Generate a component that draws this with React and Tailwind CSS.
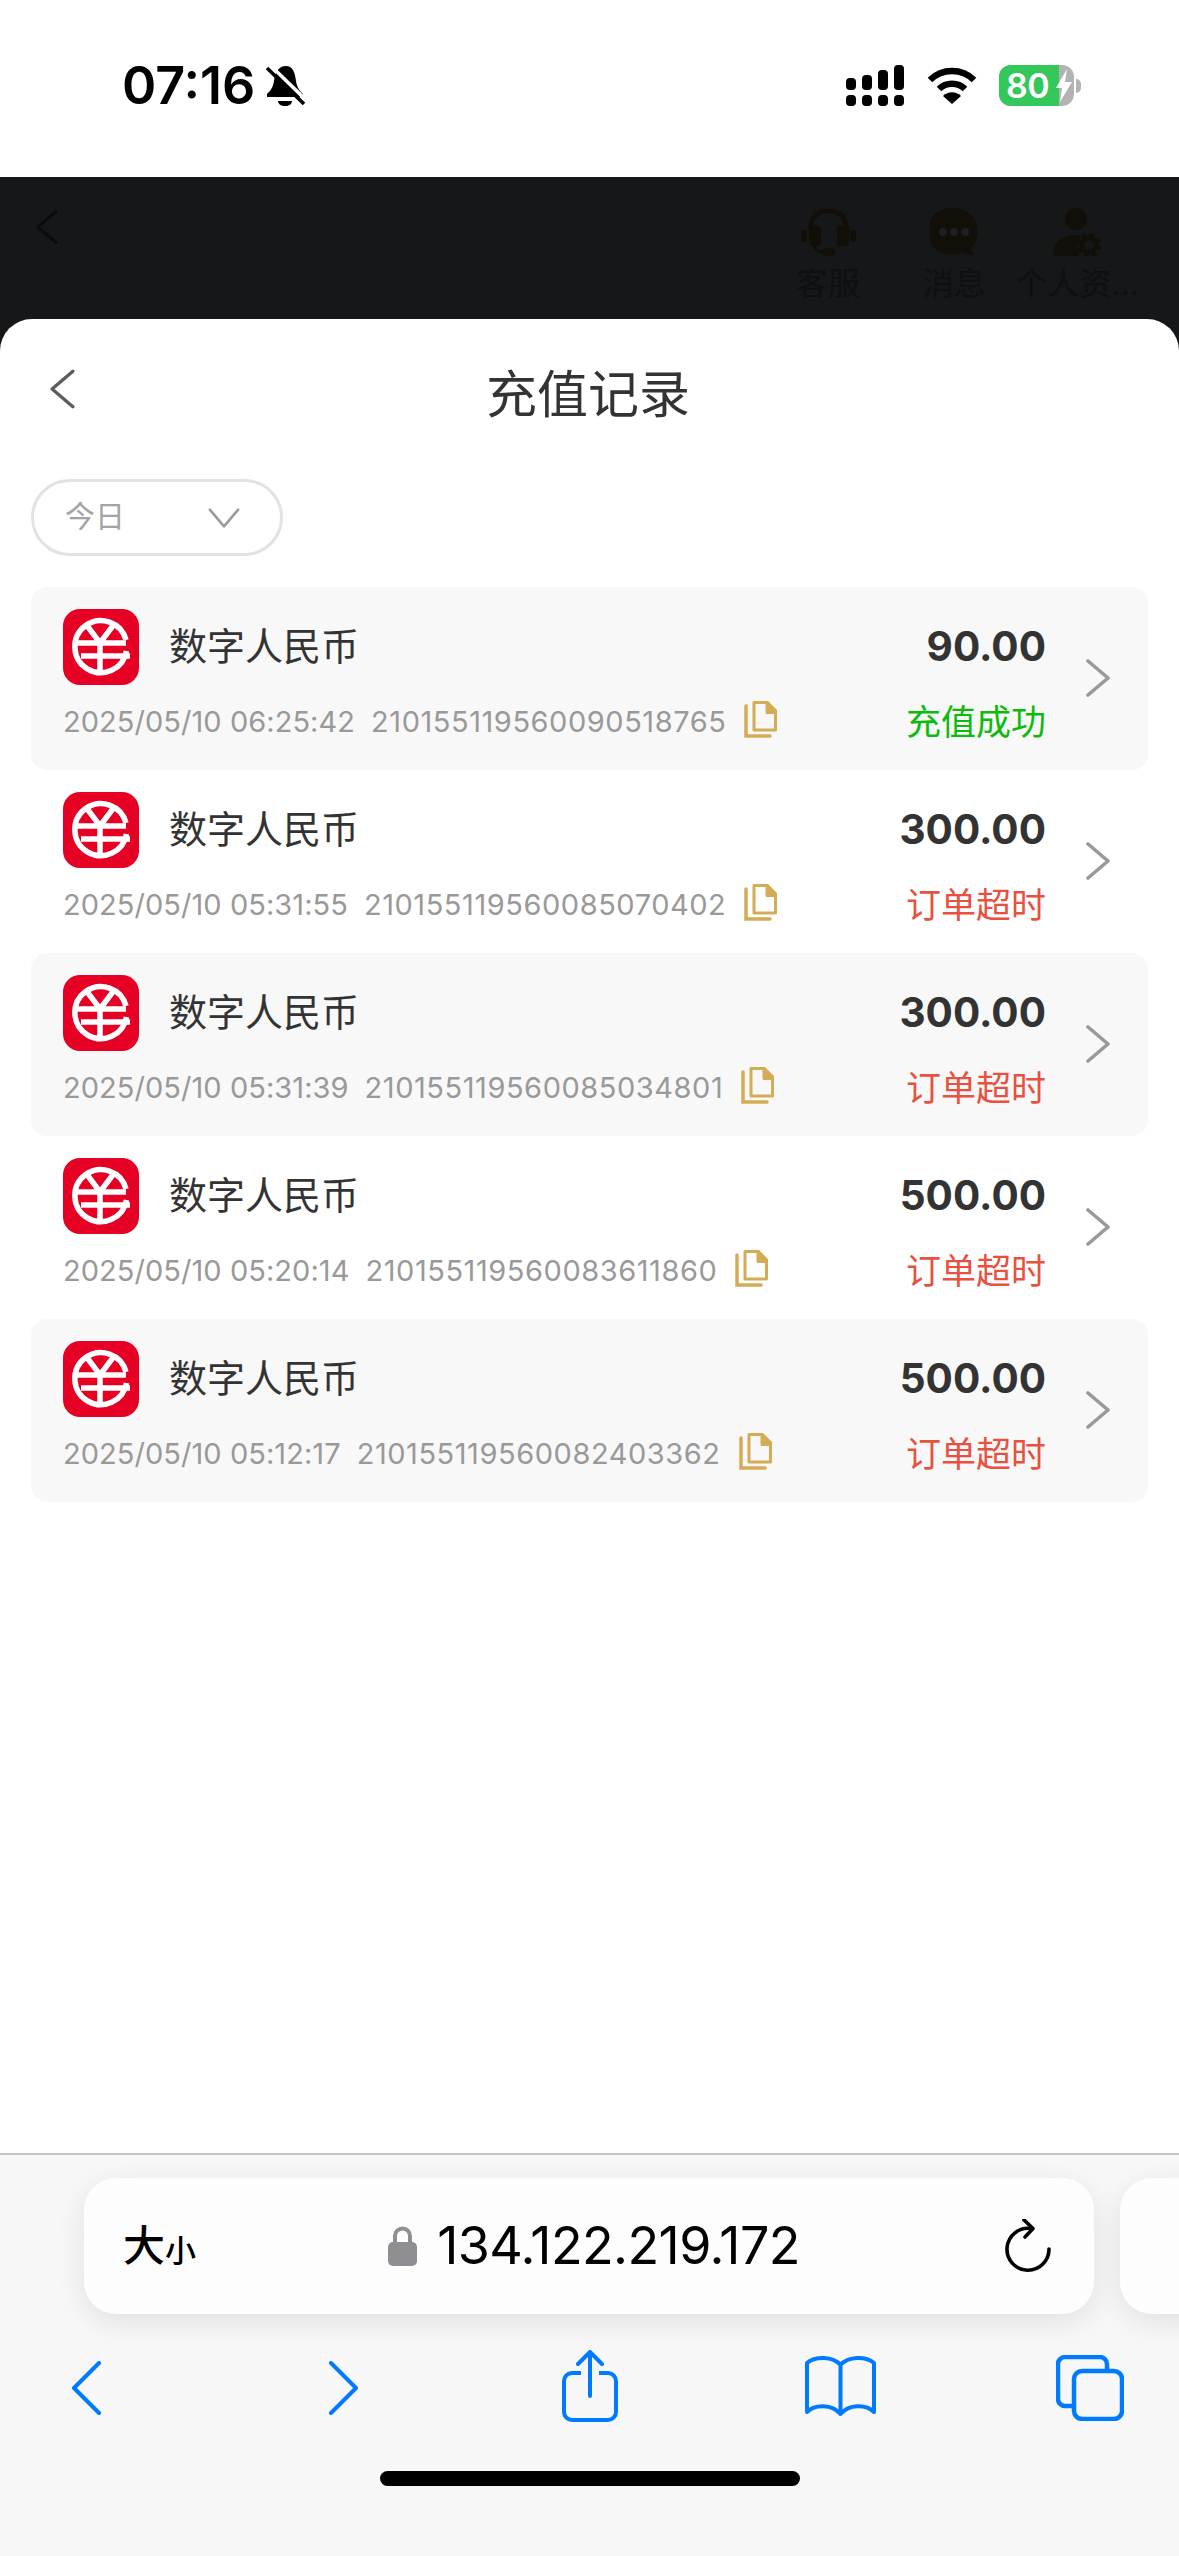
const cjk = "font-['Inter','Noto_Sans_CJK_SC',sans-serif]";

const records = [
  { date: "2025/05/10 06:25:42", id: "210155119560090518765", amount: "90.00", status: "充值成功", ok: true },
  { date: "2025/05/10 05:31:55", id: "210155119560085070402", amount: "300.00", status: "订单超时" },
  { date: "2025/05/10 05:31:39", id: "210155119560085034801", amount: "300.00", status: "订单超时" },
  { date: "2025/05/10 05:20:14", id: "210155119560083611860", amount: "500.00", status: "订单超时" },
  { date: "2025/05/10 05:12:17", id: "210155119560082403362", amount: "500.00", status: "订单超时" },
];

function Logo() {
  return (
    <svg width="76" height="76" viewBox="0 0 76 76" className="shrink-0">
      <rect width="76" height="76" rx="17" fill="#e60023" />
      <path d="M63.500 42A26 26 0 1 1 63 31" fill="none" stroke="#fff" strokeWidth="5.500" />
      <path d="M22 14L37 34L52 14M37 34V64M12 34H63M18 47H67" fill="none" stroke="#fff" strokeWidth="5.500" />
    </svg>
  );
}

function CopyIcon() {
  return (
    <svg width="33" height="37" viewBox="0 0 33 37" className="shrink-0">
      <path d="M2 5V35H26" fill="none" stroke="#d4ac55" strokeWidth="3.500" strokeLinecap="round" />
      <path d="M10 1.500H23V11H31.500V29H10Z" fill="none" stroke="#d4ac55" strokeWidth="3" strokeLinejoin="round" />
      <path d="M22 0H24L33 9V13H22Z" fill="#d4ac55" />
    </svg>
  );
}

function Chevron({ className, color = "#999", w = 3.6 }) {
  return (
    <svg viewBox="0 0 24 38" className={className}>
      <path d="M2 2L22 19L2 36" fill="none" stroke={color} strokeWidth={w} strokeLinecap="round" strokeLinejoin="round" />
    </svg>
  );
}

function RecordRow({ item, shaded }) {
  return (
    <div className={`flex h-[183px] items-center rounded-[16px] pl-[32px] pr-[38px] ${shaded ? "bg-[#f8f8f8]" : ""}`}>
      <div className="flex-1 pt-[7px]">
        <div className="flex h-[76px] items-center">
          <Logo />
          <span className="ml-[30px] flex-1 pb-[2px] text-[38px] leading-none text-[#333]">数字人民币</span>
          <span className="-mr-[1px] pt-[2px] text-[40.5px] font-bold leading-none text-[#333]">{item.amount}</span>
        </div>
        <div className="mt-[5px] flex h-[66px] items-center">
          <span className="-mt-[3px] text-[29px] leading-none tracking-[0.05px] text-[#999]">{item.date}</span>
          <span className="-mt-[3px] ml-[16px] text-[29px] leading-none tracking-[0.55px] text-[#999]">{item.id}</span>
          <span className="-mt-[7px] ml-[18px]"><CopyIcon /></span>
          <span className={`-mr-[1px] ml-auto text-[35px] leading-none ${item.ok ? "text-[#0cbb0c]" : "text-[#e8503f]"}`}>{item.status}</span>
        </div>
      </div>
      <Chevron className="mb-[2px] ml-[41px] h-[38px] w-[24px] shrink-0" />
    </div>
  );
}

function HeaderAction({ label, children, className }) {
  return (
    <div className={`flex flex-col items-center ${className}`}>
      <div className="flex h-[48px] items-center justify-center">{children}</div>
      <span className="mt-[10px] whitespace-nowrap text-[32px] leading-[36px] text-[#0e1011]">{label}</span>
    </div>
  );
}

function StatusBar() {
  return (
    <div className="flex h-[177px] items-center bg-white pb-[6px] pl-[122px] pr-[98px]">
      <span className="font-['Inter'] text-[52px] font-semibold leading-none text-black">07:16</span>
      <svg width="39" height="40" viewBox="0 0 39 40" className="ml-[11px]">
        <path d="M20 0C12 0 9 7 8 15C7 22 4 25 1 28V31H37V28C34 25 31 22 30 15C29 7 27 0 20 0Z" fill="#000" />
        <path d="M12 35H26C26 38 23 40 19 40C15 40 12 38 12 35Z" fill="#000" />
        <path d="M4 -1L41 35" stroke="#fff" strokeWidth="3.500" />
        <path d="M1 2L38 38" stroke="#000" strokeWidth="3.500" />
      </svg>
      <div className="flex-1" />
      <svg width="58" height="41" viewBox="0 0 58 41" fill="#000">
        <rect x="0" y="13" width="10" height="12" rx="4" />
        <rect x="16" y="10" width="10" height="15" rx="4" />
        <rect x="32" y="5" width="10" height="20" rx="4" />
        <rect x="48" y="0" width="10" height="25" rx="4" />
        <rect x="0" y="30" width="10" height="11" rx="4" />
        <rect x="16" y="30" width="10" height="11" rx="4" />
        <rect x="32" y="30" width="10" height="11" rx="4" />
        <rect x="48" y="30" width="10" height="11" rx="4" />
      </svg>
      <svg width="50" height="37" viewBox="0 0 50 37" className="ml-[23px]">
        <path d="M3 13C15 1 35 1 47 13" fill="none" stroke="#000" strokeWidth="6.500" />
        <path d="M12 22C19 15 31 15 38 22" fill="none" stroke="#000" strokeWidth="6.500" />
        <path d="M16 29C21 24 29 24 34 29L25 37Z" fill="#000" />
      </svg>
      <div className="relative ml-[22px] flex h-[41px] w-[75px] items-center overflow-hidden rounded-[12px] bg-[#b3b3b3]">
        <div className="flex h-full w-[60px] items-center bg-[#34c759] pl-[7px]">
          <span className="font-['Inter'] text-[34px] font-semibold leading-none tracking-[-0.5px] text-white">80</span>
        </div>
        <svg width="16" height="33" viewBox="0 0 16 33" className="absolute left-[57px] top-[4px]">
          <path d="M11 0L0 19H6L4 33L16 13H9Z" fill="#fff" />
        </svg>
      </div>
      <div className="ml-[2px] h-[14px] w-[5px] rounded-r-full bg-[#b3b3b3]" />
    </div>
  );
}

function Toolbar() {
  return (
    <div className="h-[403px] border-t-2 border-[#c5c5c5] bg-[#f7f7f7]">
      <div className="flex gap-[26px] overflow-hidden pb-[37px] pl-[84px] pt-[23px]">
        <div className="relative flex h-[136px] w-[1010px] shrink-0 items-center rounded-[32px] bg-[#fdfdfd] pl-[39px] pr-[42px] shadow-[0_8px_30px_rgba(0,0,0,0.09)]">
          <span className="text-[42px] font-medium leading-none text-black">大</span>
          <span className="mt-[8px] text-[31px] font-medium leading-none text-black">小</span>
          <div className="flex flex-1 items-center justify-center pr-[13px]">
            <svg width="29" height="40" viewBox="0 0 29 40">
              <path d="M7 18V10a7.500 7.500 0 0 1 15 0v8" fill="none" stroke="#8e8e93" strokeWidth="4" />
              <rect y="16" width="29" height="24" rx="5" fill="#8e8e93" />
            </svg>
            <span className="ml-[20px] font-['Inter'] text-[52px] leading-none tracking-[-0.6px] text-black">134.122.219.172</span>
          </div>
          <svg width="47" height="54" viewBox="0 0 47 54" fill="none" stroke="#000" strokeWidth="3.600" strokeLinecap="round" strokeLinejoin="round">
            <path d="M26 9.500A21 21 0 1 0 44 30" />
            <path d="M19 1L28 9.500L20 18" />
          </svg>
        </div>
        <div className="h-[136px] w-[200px] shrink-0 rounded-[32px] bg-[#fdfdfd] shadow-[0_8px_30px_rgba(0,0,0,0.09)]" />
      </div>
      <div className="-mt-[1px] flex h-[72px] items-center pl-[71px]">
        <svg width="31" height="54" viewBox="0 0 31 54" fill="none" stroke="#007aff" strokeWidth="4" strokeLinecap="round" strokeLinejoin="round" className="mt-[3px]">
          <path d="M28 2L3 27L28 52" />
        </svg>
        <svg width="31" height="54" viewBox="0 0 31 54" fill="none" stroke="#007aff" strokeWidth="4" strokeLinecap="round" strokeLinejoin="round" className="ml-[226px] mt-[3px]">
          <path d="M3 2L28 27L3 52" />
        </svg>
        <svg width="56" height="72" viewBox="0 0 56 72" fill="none" stroke="#007aff" strokeWidth="4" strokeLinecap="round" strokeLinejoin="round" className="ml-[203px]">
          <path d="M19 23H10a8 8 0 0 0-8 8v31a8 8 0 0 0 8 8h36a8 8 0 0 0 8-8V31a8 8 0 0 0-8-8h-9" strokeLinecap="butt" />
          <path d="M28 46V2M16 14L28 2L40 14" />
        </svg>
        <svg width="71" height="60" viewBox="0 0 71 60" fill="none" stroke="#007aff" strokeWidth="4" strokeLinecap="round" strokeLinejoin="round" className="ml-[187px]">
          <path d="M35.500 9C28 0 10 0 2 7V56C10 48 27 48 35.500 58C44 48 61 48 69 56V7C61 0 43 0 35.500 9V58" />
        </svg>
        <svg width="68" height="66" viewBox="0 0 68 66" fill="none" stroke="#007aff" strokeWidth="4.500" className="ml-[180px] mt-[3px]">
          <path d="M16 51H9a7 7 0 0 1-7-7V9a7 7 0 0 1 7-7h35a7 7 0 0 1 7 7v7" />
          <rect x="18" y="16" width="48" height="48" rx="8" />
        </svg>
      </div>
      <div className="mx-auto mt-[49px] h-[15px] w-[420px] rounded-full bg-black" />
    </div>
  );
}

export default function App() {
  return (
    <div className={`flex h-[2556px] w-[1179px] flex-col overflow-hidden bg-white ${cjk}`}>
      <StatusBar />
      <div className="flex flex-1 flex-col bg-[#151719]">
        <div className="flex h-[142px] pl-[36px] pr-[42px] pt-[31px]">
          <Chevron className="h-[38px] w-[22px] rotate-180" color="#0a0b0c" w={3} />
          <div className="ml-auto flex gap-[31px]">
            <HeaderAction label="客服" className="mr-[31px] w-[64px]">
              <svg width="55" height="47" viewBox="0 0 55 47" fill="#110f07">
                <path d="M10 20V18C10 -4 45 -4 45 18V20" fill="none" stroke="#110f07" strokeWidth="5" />
                <rect x="8" y="17" width="12" height="20" rx="4" />
                <rect x="36" y="17" width="12" height="20" rx="4" />
                <rect x="0" y="21" width="6" height="12" rx="3" />
                <rect x="49" y="21" width="6" height="12" rx="3" />
                <path d="M13 36C14 41 18 43 23 43" fill="none" stroke="#110f07" strokeWidth="3" />
                <rect x="21" y="39" width="13" height="8" rx="4" />
              </svg>
            </HeaderAction>
            <HeaderAction label="消息" className="w-[64px]">
              <svg width="48" height="48" viewBox="0 0 48 48">
                <path d="M24 0a24 23.500 0 0 1 17 40l3 7c-5 0-9-1-12-2.500A24 23.500 0 1 1 24 0z" fill="#110f07" />
                <circle cx="13" cy="24" r="4" fill="#1d1f20" />
                <circle cx="24" cy="24" r="4" fill="#1d1f20" />
                <circle cx="35" cy="24" r="4" fill="#1d1f20" />
              </svg>
            </HeaderAction>
            <HeaderAction label="个人资..." className="w-[120px]">
              <svg width="48" height="48" viewBox="0 0 48 48" fill="#110f07">
                <circle cx="23" cy="11" r="11" />
                <path d="M0 46C0 34 10 27 22 27C25 27 27 27.500 29 28C24 32 22 41 26 48H6C2 48 0 48 0 46Z" />
                <circle cx="36" cy="37" r="7" fill="none" stroke="#110f07" strokeWidth="5" />
                <circle cx="36" cy="37" r="10.500" fill="none" stroke="#110f07" strokeWidth="3.500" strokeDasharray="5 3.250" />
              </svg>
            </HeaderAction>
          </div>
        </div>
        <div className="flex-1 rounded-t-[32px] bg-white">
          <div className="relative flex h-[160px] items-center justify-center pb-[10px] pr-[3px]">
            <Chevron className="absolute left-[50px] top-[50px] h-[40px] w-[25px] rotate-180" color="#5c5c5c" w={3.2} />
            <h1 className="text-[51px] font-normal leading-none text-[#333]">充值记录</h1>
          </div>
          <div className="px-[31px]">
            <div className="flex h-[77px] w-[252px] items-center rounded-full border-[3px] border-[#e2e2e2] pl-[31px]">
              <span className="pb-[3px] text-[30px] leading-none text-[#a3a3a3]">今日</span>
              <Chevron className="ml-[89px] h-[32px] w-[20px] rotate-90" color="#999" w={3} />
            </div>
            <div className="mt-[31px]">
              {records.map((item, i) => (
                <RecordRow key={item.id} item={item} shaded={i % 2 === 0} />
              ))}
            </div>
          </div>
        </div>
      </div>
      <Toolbar />
    </div>
  );
}
